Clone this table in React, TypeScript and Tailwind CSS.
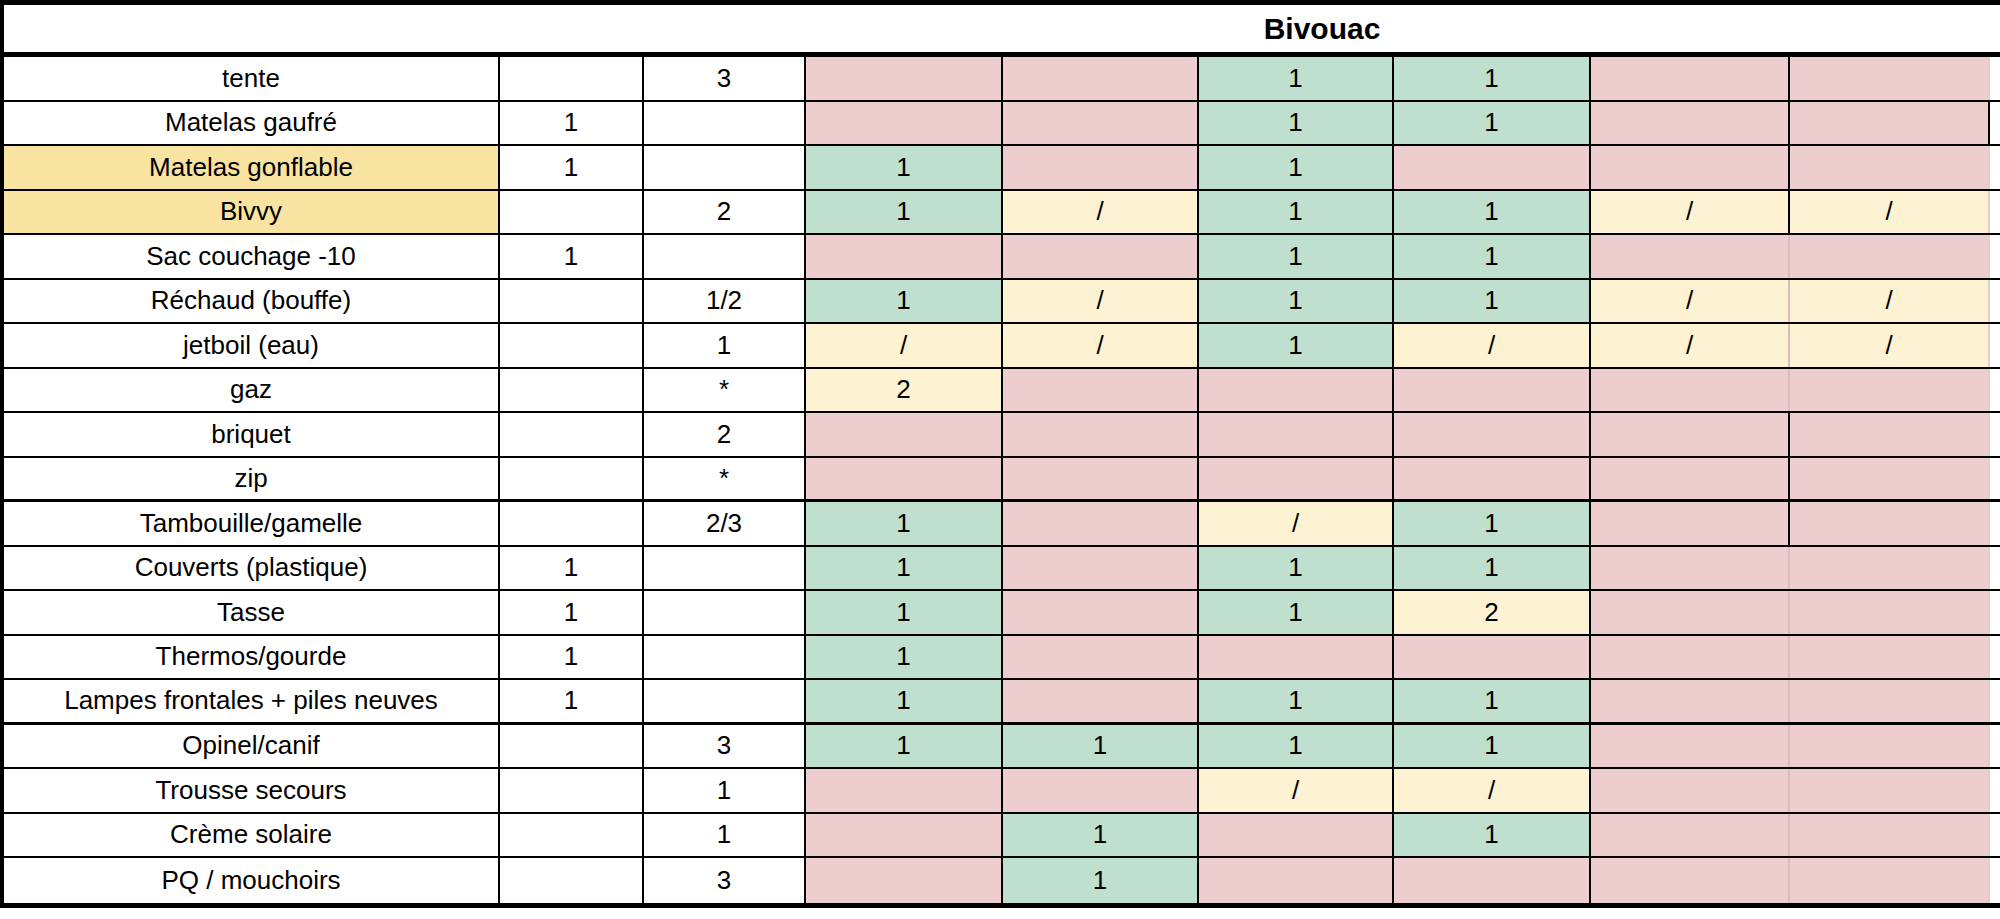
import React from 'react';

type Row = {
  label: string;
  solo: string;
  group: string;
  cells: string[];
  highlight?: boolean;
  thick?: boolean;
  col8Black?: boolean;
  edgeBlack?: boolean;
};

const rows: Row[] = [
  { label: 'tente', solo: '', group: '3', cells: ['p', 'p', 'g1', 'g1', 'p', 'p'], col8Black: true },
  { label: 'Matelas gaufré', solo: '1', group: '', cells: ['p', 'p', 'g1', 'g1', 'p', 'p'], col8Black: true, edgeBlack: true },
  { label: 'Matelas gonflable', solo: '1', group: '', cells: ['g1', 'p', 'g1', 'p', 'p', 'p'], highlight: true, col8Black: true },
  { label: 'Bivvy', solo: '', group: '2', cells: ['g1', 'y/', 'g1', 'g1', 'y/', 'y/'], highlight: true, col8Black: true },
  { label: 'Sac couchage -10', solo: '1', group: '', cells: ['p', 'p', 'g1', 'g1', 'p', 'p'] },
  { label: 'Réchaud (bouffe)', solo: '', group: '1/2', cells: ['g1', 'y/', 'g1', 'g1', 'y/', 'y/'] },
  { label: 'jetboil (eau)', solo: '', group: '1', cells: ['y/', 'y/', 'g1', 'y/', 'y/', 'y/'] },
  { label: 'gaz', solo: '', group: '*', cells: ['y2', 'p', 'p', 'p', 'p', 'p'] },
  { label: 'briquet', solo: '', group: '2', cells: ['p', 'p', 'p', 'p', 'p', 'p'], col8Black: true },
  { label: 'zip', solo: '', group: '*', cells: ['p', 'p', 'p', 'p', 'p', 'p'], col8Black: true, thick: true },
  { label: 'Tambouille/gamelle', solo: '', group: '2/3', cells: ['g1', 'p', 'y/', 'g1', 'p', 'p'], col8Black: true },
  { label: 'Couverts (plastique)', solo: '1', group: '', cells: ['g1', 'p', 'g1', 'g1', 'p', 'p'] },
  { label: 'Tasse', solo: '1', group: '', cells: ['g1', 'p', 'g1', 'y2', 'p', 'p'] },
  { label: 'Thermos/gourde', solo: '1', group: '', cells: ['g1', 'p', 'p', 'p', 'p', 'p'] },
  { label: 'Lampes frontales + piles neuves', solo: '1', group: '', cells: ['g1', 'p', 'g1', 'g1', 'p', 'p'], thick: true },
  { label: 'Opinel/canif', solo: '', group: '3', cells: ['g1', 'g1', 'g1', 'g1', 'p', 'p'] },
  { label: 'Trousse secours', solo: '', group: '1', cells: ['p', 'p', 'y/', 'y/', 'p', 'p'] },
  { label: 'Crème solaire', solo: '', group: '1', cells: ['p', 'g1', 'p', 'g1', 'p', 'p'] },
  { label: 'PQ / mouchoirs', solo: '', group: '3', cells: ['p', 'g1', 'p', 'p', 'p', 'p'] },
];

const fills: Record<string, string> = {
  p: 'bg-[#edcdcd]',
  g: 'bg-[#c0e0cf]',
  y: 'bg-[#fdf2d1]',
};

const widths = ['w-[197px]', 'w-[196px]', 'w-[195px]', 'w-[197px]', 'w-[199px]', 'w-[200px]'];

const App: React.FC = () => {
  return (
    <div className="w-[2000px] h-[919px] bg-white text-black text-[26px] font-['Liberation_Sans',Arial,sans-serif]">
      <div className="border-l-4 border-t-[5px] border-b-[5px] border-black">
        {/* Header */}
        <div className="h-[52px] flex border-b-[5px] border-black">
          <div className="w-[640px]"></div>
          <div className="flex-1 flex items-center justify-center font-bold text-[30px]">Bivouac</div>
        </div>

        {/* Rows */}
        {rows.map((row, i) => (
          <div
            key={row.label}
            className={`flex h-[44.5px] ${
              i === rows.length - 1 ? '' : row.thick ? 'border-b-[3px] border-black' : 'border-b-2 border-black'
            }`}
          >
            <div
              className={`w-[496px] border-r-2 border-black flex items-center justify-center ${
                row.highlight ? 'bg-[#f9e3a1]' : ''
              }`}
            >
              {row.label}
            </div>
            <div className="w-[144px] border-r-2 border-black flex items-center justify-center">{row.solo}</div>
            <div className="w-[162px] border-r-2 border-black flex items-center justify-center">{row.group}</div>
            {row.cells.map((c, j) => {
              const border =
                j === 4
                  ? row.col8Black
                    ? 'border-r-2 border-black'
                    : 'border-r-2 border-[#d9bcbc]'
                  : j === 5
                  ? row.edgeBlack
                    ? 'border-r-2 border-black'
                    : 'border-r-2 border-[#e3cccc]'
                  : 'border-r-2 border-black';
              return (
                <div
                  key={j}
                  className={`${widths[j]} ${fills[c[0]]} ${border} flex items-center justify-center`}
                >
                  {c.slice(1)}
                </div>
              );
            })}
            <div className="flex-1 bg-white"></div>
          </div>
        ))}
      </div>
    </div>
  );
};

export default App;
